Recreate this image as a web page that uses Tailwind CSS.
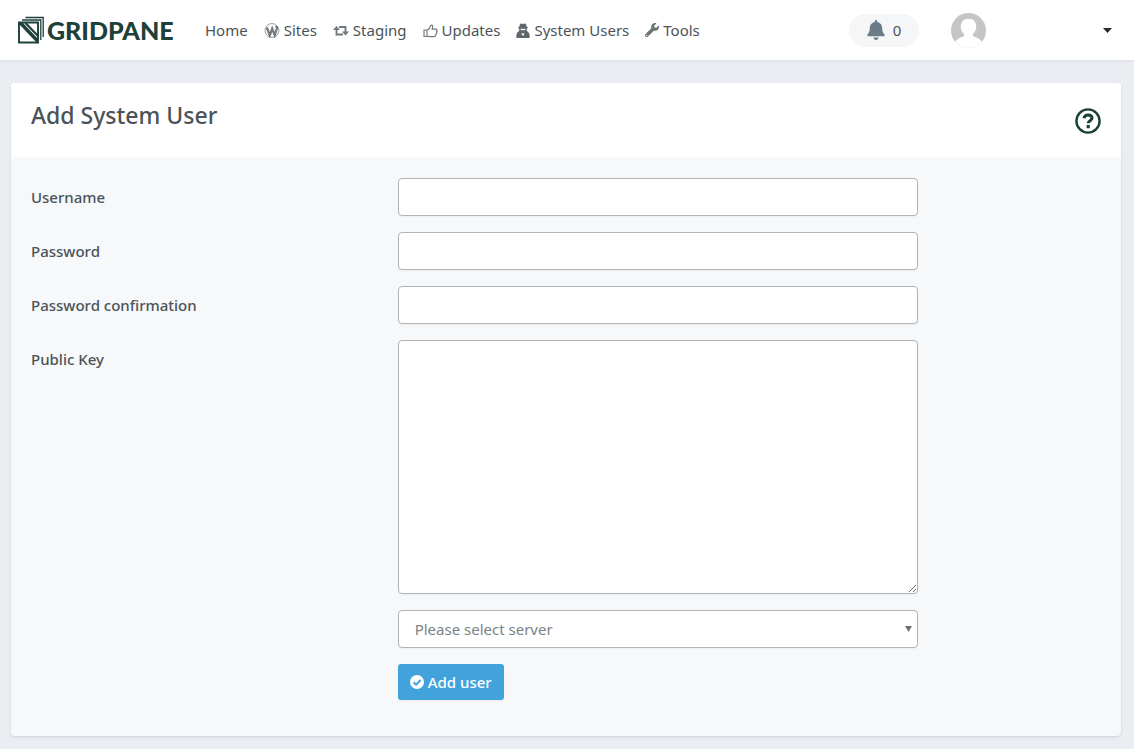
<!DOCTYPE html>
<html lang="en">
<head>
    <meta charset="UTF-8">
    <meta name="viewport" content="width=device-width, initial-scale=1.0">
    <title>Add System User</title>
    <script src="https://cdn.jsdelivr.net/npm/@tailwindcss/browser@4"></script>
</head>
<body class="min-h-screen bg-[#eaeef2] font-['Noto_Sans','Open_Sans',sans-serif] text-[15px] text-[#4b5358] antialiased">
    <!-- Top navigation -->
    <header class="flex h-[62px] items-center border-b-2 border-[#e3e6e9] bg-white pl-[18px] pr-[22px]">
        <a href="#" aria-label="GridPane" class="mr-8 flex w-[155px] shrink-0 items-center gap-[3px] text-[#1d4038]">
            <svg class="h-7 w-[26px] shrink-0" viewBox="0 0 26 28" fill="none" stroke="currentColor">
                <path d="M1 6.500h19v20H1z" stroke-width="1.900"/>
                <path d="M4 4h18.800v20M7.500 1.500h17.700v19.500" stroke-width="1.300"/>
                <path d="M1 6.500h3.500L20 23v3.500z" fill="currentColor" stroke="none"/>
                <path d="M1 6.500L20 26.500" stroke-width="2"/>
                <path d="M7.500 7L20 20" stroke-width="2.200"/>
            </svg>
            <span class="font-[Lato] text-[25px] font-black leading-7">GRIDPANE</span>
        </a>

        <nav class="flex items-center gap-4 whitespace-nowrap">
            <a href="#">Home</a>
            <a href="#" class="flex items-center gap-1">
                <svg class="h-[15px] w-4 text-[#72797d]" viewBox="0 0 16 16" fill="none" stroke="currentColor">
                    <circle cx="8" cy="8" r="7.400" stroke-width=".8"/>
                    <path d="M2.500 4.800l3.200 8.400L8.200 6l2.700 7.200 2.300-7.300c.4-1.400-.6-2-1-2.800" stroke-width="2.400"/>
                </svg>
                Sites
            </a>
            <a href="#" class="flex items-center gap-1">
                <svg class="h-[15px] w-4 text-[#72797d]" viewBox="0 0 16 15" fill="none" stroke="currentColor" stroke-width="1.900">
                    <path d="M3.500 5v6.500H10M6 4h6.500v6"/>
                    <path d="M0 7L3.500 3 7 7zM9 8.500h7l-3.500 4z" fill="currentColor" stroke="none"/>
                </svg>
                Staging
            </a>
            <a href="#" class="flex items-center gap-1">
                <svg class="size-[15px] text-[#72797d]" viewBox="0 0 15 15" fill="none" stroke="currentColor" stroke-width="1.200" stroke-linejoin="round">
                    <path d="M1 7h3v6.500H1zM4 7.500c2-1 3-2.500 3.300-4.300.2-1.500 2.400-1.700 2.400.5 0 1-.4 1.700-.7 2.500h3.700c1.600 0 1.800 1.800.8 2.200.7.800.4 1.900-.4 2.200.3.900-.1 1.600-.8 1.800 0 1-.7 1.300-1.600 1.300H8c-1.600 0-2.500-.7-4-.7"/>
                </svg>
                Updates
            </a>
            <a href="#" class="flex items-center gap-1">
                <svg class="h-[15px] w-[14px] text-[#5f676b]" viewBox="0 0 14 15" fill="currentColor">
                    <path d="M4.500.8c.9-.6 1.700.1 2.500.1s1.600-.7 2.500-.1c.7.500.9 1.900 1.100 3 .8.200 1.400.5 1.400.8 0 .4-.5.700-1.200.9.100 1.200.2 1.800-.2 2.600 2.200.4 3.100 2.900 3.100 5.900 0 .6-.4 1-1 1H1.300c-.6 0-1-.4-1-1 0-3 .9-5.500 3.100-5.900-.4-.8-.3-1.400-.2-2.600C2.500 5.300 2 5 2 4.600c0-.3.600-.6 1.400-.8.200-1.100.4-2.500 1.100-3z"/>
                    <path d="M4.500 5.800h2l.5.400.5-.4h2l-.4 1.400H7.600L7 6.700l-.6.500H4.900zM5.500 9.800L7 10.800l1.500-1-.9 3.200-.6-1.200-.6 1.200z" fill="#fff"/>
                </svg>
                System Users
            </a>
            <a href="#" class="flex items-center gap-1">
                <svg class="size-[14px] text-[#6a7276]" viewBox="0 0 512 512" fill="currentColor">
                    <path d="M507.730 109.100c-2.240-9.030-13.540-12.090-20.120-5.510l-74.360 74.360-67.880-11.310-11.310-67.880 74.360-74.360c6.620-6.620 3.430-17.900-5.660-20.160-47.380-11.740-99.550.91-136.580 37.930-39.640 39.640-50.550 97.100-34.050 147.200L18.740 402.760c-24.990 24.990-24.990 65.510 0 90.500 24.990 24.990 65.510 24.990 90.500 0l213.210-213.210c50.120 16.710 107.470 5.680 147.370-34.220 37.070-37.070 49.700-89.320 37.910-136.730zM64 472c-13.250 0-24-10.750-24-24 0-13.260 10.750-24 24-24s24 10.740 24 24c0 13.250-10.750 24-24 24z"/>
                </svg>
                Tools
            </a>
        </nav>

        <div class="ml-auto flex items-center">
            <button type="button" aria-label="Notifications" class="mr-8 flex h-[33px] w-[70px] items-center justify-center gap-2 rounded-full bg-[#f4f6f7]">
                <svg class="h-5 w-[18px] text-[#6b7c89]" viewBox="0 0 448 512" fill="currentColor">
                    <path d="M224 512c35.320 0 63.970-28.650 63.970-64H160.030c0 35.350 28.650 64 63.970 64zm215.390-149.710c-19.320-20.760-55.470-51.990-55.470-154.290 0-77.700-54.480-139.900-127.940-155.160V32c0-17.670-14.320-32-31.980-32s-31.980 14.330-31.980 32v20.840C118.560 68.100 64.080 130.300 64.080 208c0 102.300-36.150 133.530-55.470 154.290-6 6.450-8.660 14.160-8.610 21.710.11 16.400 12.980 32 32.100 32h383.800c19.120 0 32-15.600 32.100-32 .05-7.550-2.610-15.270-8.610-21.710z"/>
                </svg>
                <span>0</span>
            </button>
            <button type="button" aria-label="Account menu" class="flex w-[161px] items-center justify-between">
                <svg class="size-[35px] rounded-full" viewBox="0 0 36 36">
                    <path d="M0 0h36v36H0z" fill="#c5c5c5"/>
                    <path d="M18 6c5 0 8 3.500 8 8 0 3.300-1.500 5.800-3.500 7.500-.5 2 .8 2.700 3 3.500 3.500 1.200 5.500 3 6.500 6v5H4v-5c1-3 3-4.800 6.500-6 2.200-.8 3.500-1.500 3-3.500C11.500 19.800 10 17.300 10 14c0-4.500 3-8 8-8z" fill="#fff"/>
                </svg>
                <svg class="h-[5px] w-[9px] text-[#242a2e]" viewBox="0 0 9 5" fill="currentColor"><path d="M0 0h9L4.500 5z"/></svg>
            </button>
        </div>
    </header>

    <!-- Form card -->
    <main class="mt-[21px] mr-[13px] mb-3 ml-[11px] overflow-hidden rounded bg-[#f6f8f9] shadow">
        <div class="flex h-[74px] items-start justify-between bg-white px-5 pt-4">
            <h1 class="text-[23px] leading-8 font-medium">Add System User</h1>
            <button type="button" aria-label="Help" class="mt-[9px]">
                <svg class="size-[26px] text-[#1d4038]" viewBox="0 0 26 26" fill="none" stroke="currentColor">
                    <circle cx="13" cy="13" r="11.600" stroke-width="2.400"/>
                    <path d="M9 10.300c.4-2.200 1.900-3.300 4-3.300 2.300 0 4 1.200 4 3.100 0 2.700-3.800 2.500-3.800 5.200" stroke-width="3"/>
                    <path d="M11.600 17h3.200v3.200h-3.200z" fill="currentColor" stroke="none"/>
                </svg>
            </button>
        </div>

        <form class="flex flex-col gap-4 px-[5px] pt-[21px] pb-9">
            <div class="flex">
                <label for="username" class="w-1/3 px-[15px] pt-2 font-medium">Username</label>
                <div class="w-1/2 px-[15px]">
                    <input id="username" type="text" class="block h-[38px] w-full rounded border border-[#b0b5b9] bg-white px-3 shadow-xs">
                </div>
            </div>
            <div class="flex">
                <label for="password" class="w-1/3 px-[15px] pt-2 font-medium">Password</label>
                <div class="w-1/2 px-[15px]">
                    <input id="password" type="password" class="block h-[38px] w-full rounded border border-[#b0b5b9] bg-white px-3 shadow-xs">
                </div>
            </div>
            <div class="flex">
                <label for="password-confirmation" class="w-1/3 px-[15px] pt-2 font-medium">Password confirmation</label>
                <div class="w-1/2 px-[15px]">
                    <input id="password-confirmation" type="password" class="block h-[38px] w-full rounded border border-[#b0b5b9] bg-white px-3 shadow-xs">
                </div>
            </div>
            <div class="flex">
                <label for="public-key" class="w-1/3 px-[15px] pt-2 font-medium">Public Key</label>
                <div class="w-1/2 px-[15px]">
                    <textarea id="public-key" class="block h-[254px] w-full resize rounded border border-[#b0b5b9] bg-white px-3 py-2 shadow-xs"></textarea>
                </div>
            </div>
            <div class="ml-[33.333%] w-1/2 px-[15px]">
                <div class="relative">
                    <select aria-label="Server" class="block h-[38px] w-full appearance-none rounded border border-[#b0b5b9] bg-white px-4 text-[#7b8388] shadow-xs">
                        <option>Please select server</option>
                    </select>
                    <svg class="pointer-events-none absolute top-4 right-[6px] h-[6px] w-[7px] text-[#6d7478]" viewBox="0 0 7 6" fill="currentColor"><path d="M0 0h7L3.500 6z"/></svg>
                </div>
            </div>
            <div class="ml-[33.333%] w-1/2 px-[15px]">
                <button type="submit" class="flex h-9 items-center gap-1 rounded-[3px] bg-[#41a2dc] px-3 font-medium whitespace-nowrap text-white shadow-xs">
                    <svg class="size-[14px]" viewBox="0 0 14 14" fill="none">
                        <circle cx="7" cy="7" r="7" fill="#fff"/>
                        <path d="M3.500 7.200l2.600 2.500 4.600-4.700" stroke="#41a2dc" stroke-width="2"/>
                    </svg>
                    Add user
                </button>
            </div>
        </form>
    </main>
</body>
</html>
